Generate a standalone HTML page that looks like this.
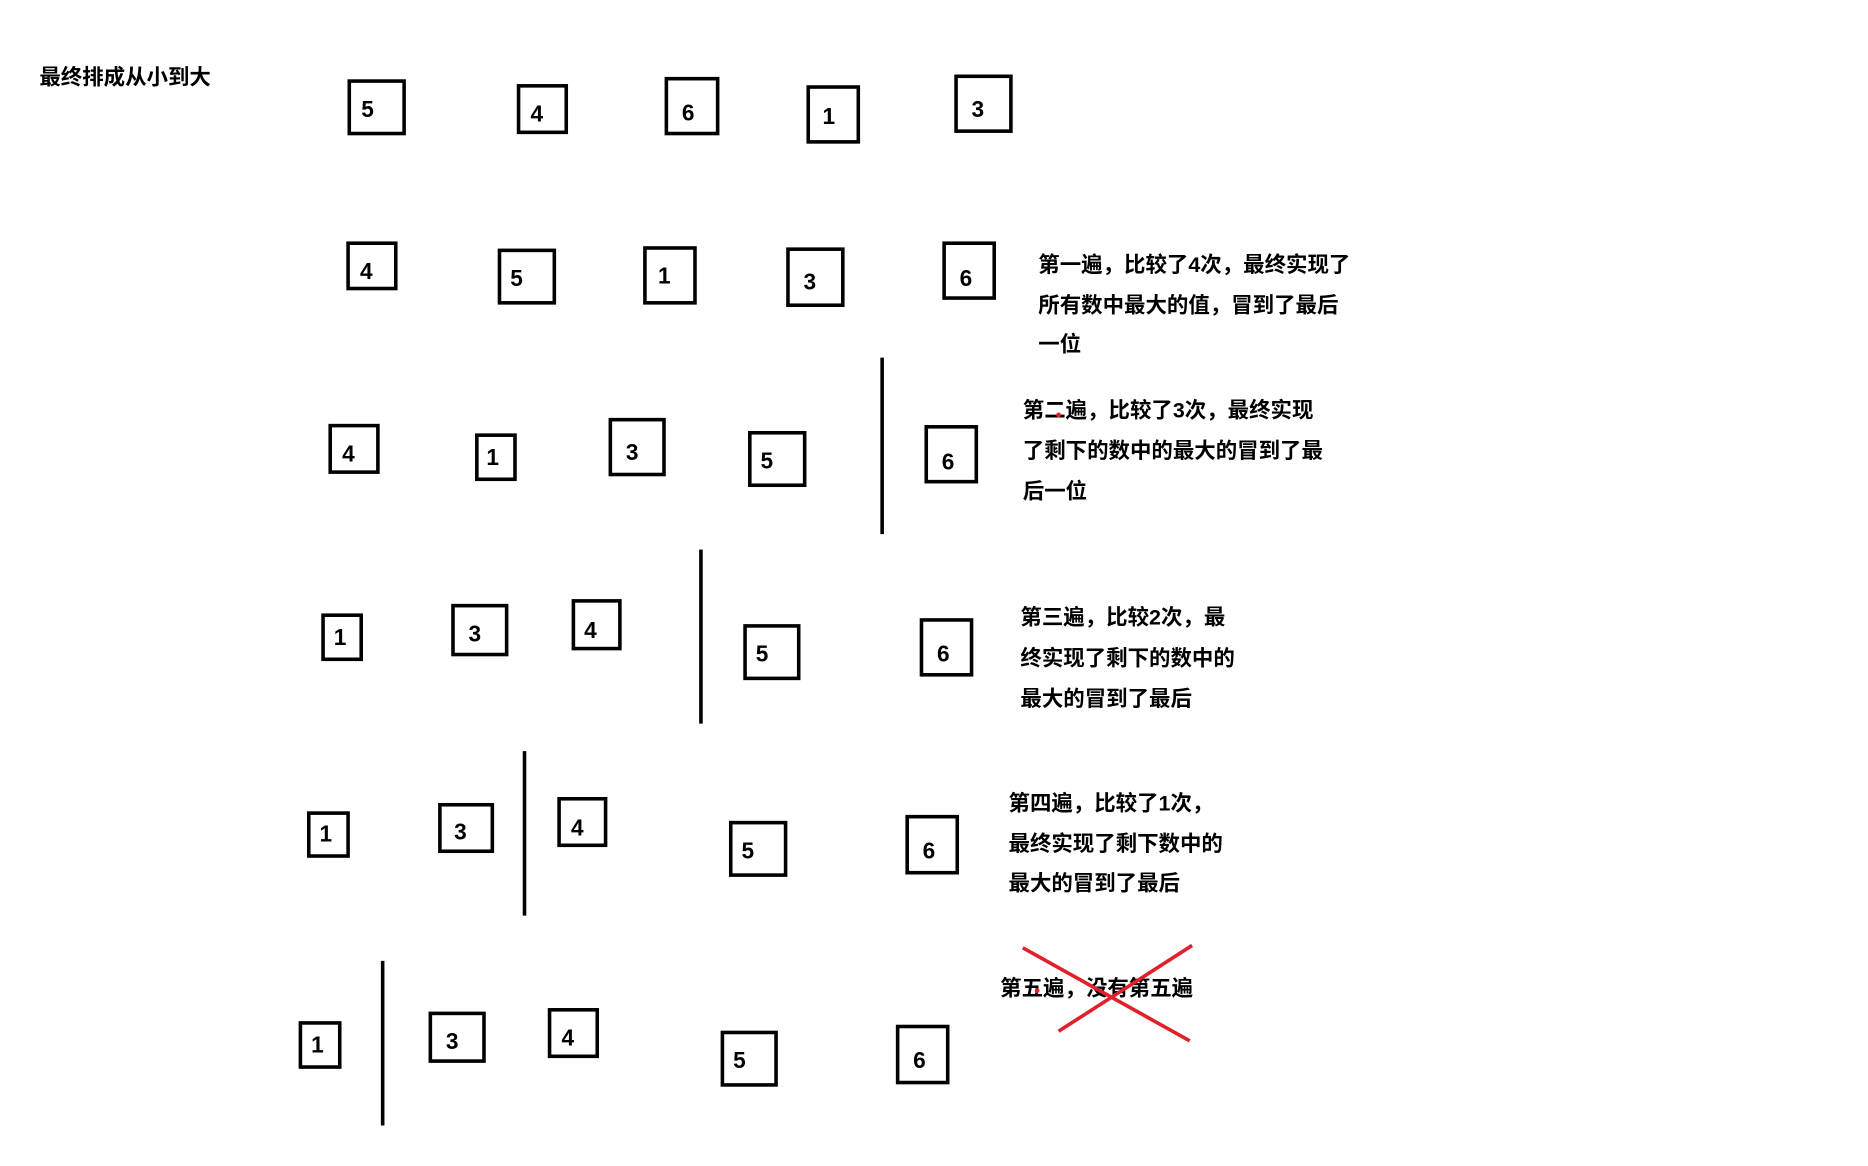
<!DOCTYPE html>
<html><head><meta charset="utf-8"><style>
html,body{margin:0;padding:0;background:#fff;width:1868px;height:1166px;overflow:hidden}
svg text{font-family:"Liberation Sans","Noto Sans CJK SC",sans-serif;font-weight:bold;fill:#000}
.d{font-size:19px}
.t{font-size:18px}
rect{fill:none;stroke:#000;stroke-width:3}
</style></head><body>
<svg width="1868" height="1166" viewBox="0 0 1567 978" preserveAspectRatio="none" xmlns="http://www.w3.org/2000/svg">
<text class="t" x="33" y="71">最终排成从小到大</text>
<g>
<rect x="293" y="68" width="46" height="44"/><text class="d" x="303" y="98">5</text>
<rect x="435" y="72" width="40" height="39"/><text class="d" x="445" y="102">4</text>
<rect x="559" y="66" width="43" height="46"/><text class="d" x="572" y="101">6</text>
<rect x="678" y="73" width="42" height="46"/><text class="d" x="690" y="104">1</text>
<rect x="802" y="64" width="46" height="46"/><text class="d" x="815" y="98">3</text>

<rect x="292" y="204" width="40" height="38"/><text class="d" x="302" y="234">4</text>
<rect x="419" y="210" width="46" height="44"/><text class="d" x="428" y="240">5</text>
<rect x="541" y="208" width="42" height="46"/><text class="d" x="552" y="238">1</text>
<rect x="661" y="209" width="46" height="47"/><text class="d" x="674" y="243">3</text>
<rect x="792" y="204" width="42" height="46"/><text class="d" x="805" y="240">6</text>
<text class="t" x="871" y="228">第一遍，比较了4次，最终实现了</text>
<text class="t" x="871" y="262">所有数中最大的值，冒到了最后</text>
<text class="t" x="871" y="295">一位</text>

<line x1="740" y1="300" x2="740" y2="448" stroke="#000" stroke-width="3"/>
<rect x="277" y="357" width="40" height="39"/><text class="d" x="287" y="387">4</text>
<rect x="400" y="365" width="32" height="37"/><text class="d" x="408" y="390">1</text>
<rect x="512" y="352" width="45" height="46"/><text class="d" x="525" y="386">3</text>
<rect x="629" y="363" width="46" height="44"/><text class="d" x="638" y="393">5</text>
<rect x="777" y="358" width="42" height="46"/><text class="d" x="790" y="394">6</text>
<text class="t" x="858" y="350">第二遍，比较了3次，最终实现</text>
<text class="t" x="858" y="384">了剩下的数中的最大的冒到了最</text>
<text class="t" x="858" y="418">后一位</text>
<circle cx="888" cy="348" r="2" fill="#e02020"/>

<line x1="588" y1="461" x2="588" y2="607" stroke="#000" stroke-width="3"/>
<rect x="271" y="516" width="32" height="37"/><text class="d" x="280" y="541">1</text>
<rect x="380" y="508" width="45" height="41"/><text class="d" x="393" y="538">3</text>
<rect x="481" y="504" width="39" height="40"/><text class="d" x="490" y="535">4</text>
<rect x="625" y="525" width="45" height="44"/><text class="d" x="634" y="555">5</text>
<rect x="773" y="520" width="42" height="46"/><text class="d" x="786" y="555">6</text>
<text class="t" x="856" y="524">第三遍，比较2次，最</text>
<text class="t" x="856" y="558">终实现了剩下的数中的</text>
<text class="t" x="856" y="592">最大的冒到了最后</text>

<line x1="440" y1="630" x2="440" y2="768" stroke="#000" stroke-width="3"/>
<rect x="259" y="682" width="33" height="36"/><text class="d" x="268" y="706">1</text>
<rect x="369" y="675" width="44" height="39"/><text class="d" x="381" y="704">3</text>
<rect x="469" y="670" width="39" height="39"/><text class="d" x="479" y="701">4</text>
<rect x="613" y="690" width="46" height="44"/><text class="d" x="622" y="720">5</text>
<rect x="761" y="685" width="42" height="47"/><text class="d" x="774" y="720">6</text>
<text class="t" x="846" y="680">第四遍，比较了1次，</text>
<text class="t" x="846" y="714">最终实现了剩下数中的</text>
<text class="t" x="846" y="747">最大的冒到了最后</text>

<line x1="321" y1="806" x2="321" y2="944" stroke="#000" stroke-width="3"/>
<rect x="252" y="858" width="33" height="37"/><text class="d" x="261" y="883">1</text>
<rect x="361" y="850" width="45" height="40"/><text class="d" x="374" y="880">3</text>
<rect x="461" y="847" width="40" height="39"/><text class="d" x="471" y="877">4</text>
<rect x="606" y="866" width="45" height="44"/><text class="d" x="615" y="896">5</text>
<rect x="753" y="861" width="42" height="47"/><text class="d" x="766" y="896">6</text>
<text class="t" x="839" y="835">第五遍，没有第五遍</text>
<line x1="858" y1="795" x2="998" y2="873" stroke="#e0202a" stroke-width="3"/>
<line x1="1000" y1="793" x2="888" y2="865" stroke="#e0202a" stroke-width="3"/>
<circle cx="870" cy="831" r="2" fill="#e02020"/>
</g>
</svg>
</body></html>
